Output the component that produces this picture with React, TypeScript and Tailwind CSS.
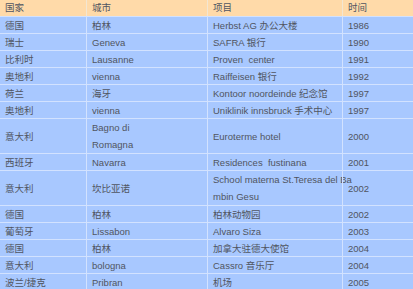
const ROWS: [string, string[], string[], string][] = [
  ['德国', ['柏林'], ['Herbst AG 办公大楼'], '1986'],
  ['瑞士', ['Geneva'], ['SAFRA 银行'], '1990'],
  ['比利时', ['Lausanne'], ['Proven  center'], '1991'],
  ['奥地利', ['vienna'], ['Raiffeisen 银行'], '1992'],
  ['荷兰', ['海牙'], ['Kontoor noordeinde 纪念馆'], '1997'],
  ['奥地利', ['vienna'], ['Uniklinik innsbruck 手术中心'], '1997'],
  ['意大利', ['Bagno di', 'Romagna'], ['Euroterme hotel'], '2000'],
  ['西班牙', ['Navarra'], ['Residences  fustinana'], '2001'],
  ['意大利', ['坎比亚诺'], ['School materna St.Teresa del Ba', 'mbin Gesu'], '2002'],
  ['德国', ['柏林'], ['柏林动物园'], '2002'],
  ['葡萄牙', ['Lissabon'], ['Alvaro Siza'], '2003'],
  ['德国', ['柏林'], ['加拿大驻德大使馆'], '2004'],
  ['意大利', ['bologna'], ['Cassro 音乐厅'], '2004'],
  ['波兰/捷克', ['Pribran'], ['机场'], '2005'],
];

function Cell({ lines, w, first }: { lines: string[]; w: string; first?: boolean }) {
  return (
    <div className={`${w} flex flex-col justify-center px-[5px] ${first ? '' : 'border-l border-[#d2e2ff]'}`}>
      {lines.map((l, i) => (
        <span key={i} className="h-[17px] leading-[17px] whitespace-pre">{l}</span>
      ))}
    </div>
  );
}

export default function App() {
  return (
    <div className="w-[413px] h-[289px] overflow-hidden bg-white font-['Liberation_Sans','Noto_Sans_CJK_SC',sans-serif] text-[9.5px] text-[#505561]">
      <div className="flex h-[16px] bg-[#ffdaa9] leading-[16px]">
        <div className="w-[86px] px-[5px]">国家</div>
        <div className="w-[121px] px-[5px] border-l border-[#f3e6d2]">城市</div>
        <div className="w-[135px] px-[5px] border-l border-[#f3e6d2]">项目</div>
        <div className="flex-1 px-[5px] border-l border-[#f3e6d2]">时间</div>
      </div>
      {ROWS.map((r, i) => {
        const tall = r[1].length > 1 || r[2].length > 1;
        return (
          <div key={i} className={`flex bg-[#a8c8ff] border-t border-[#d2e2ff] ${tall ? 'h-[35px]' : 'h-[17px]'}`}>
            <Cell lines={[r[0]]} w="w-[86px]" first />
            <Cell lines={r[1]} w="w-[121px]" />
            <Cell lines={r[2]} w="w-[135px]" />
            <Cell lines={[r[3]]} w="flex-1" />
          </div>
        );
      })}
    </div>
  );
}
